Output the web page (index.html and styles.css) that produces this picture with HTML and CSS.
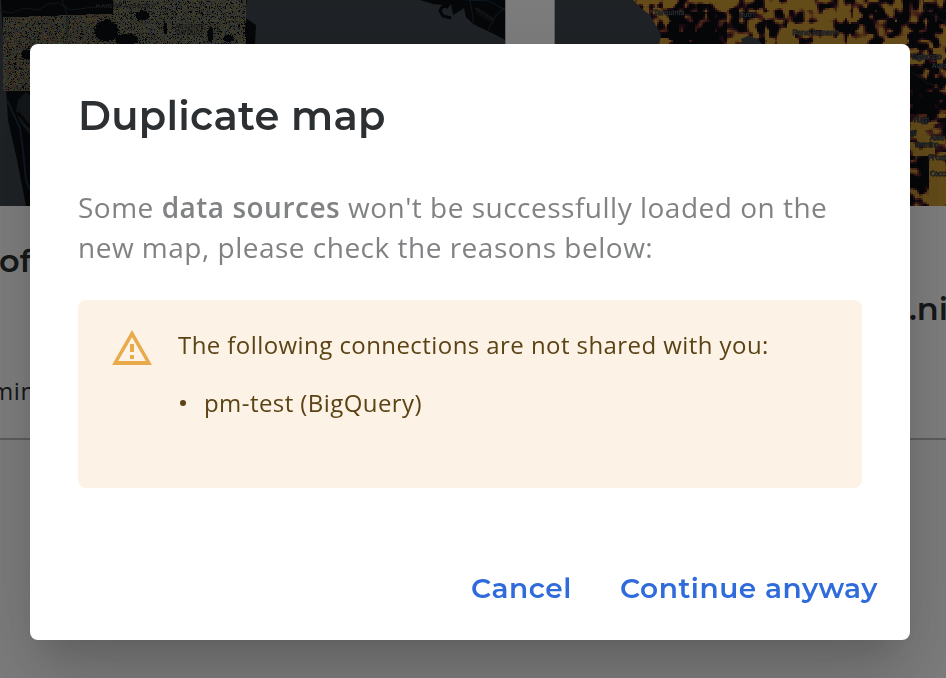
FILE: index.html
```html
<!DOCTYPE html>
<html lang="en">
<head>
<meta charset="utf-8">
<title>Duplicate map</title>
<link rel="stylesheet" href="styles.css">
</head>
<body>
<main class="maps">
  <article class="card">
    <div class="thumb">
      <canvas id="city" width="505" height="206"></canvas>
      <svg class="labels" viewBox="0 0 505 206">
        <g class="district"><text x="96" y="8" textLength="58">HAIGHT-ASHBURY</text><text x="176" y="28" textLength="27">MISSION</text><text x="176" y="34" textLength="27">DISTRICT</text></g>
      </svg>
    </div>
    <div class="name">of</div>
    <div class="meta">min</div>
  </article>
  <article class="card second">
    <div class="thumb">
      <canvas id="heat" width="392" height="206"></canvas>
      <svg class="labels" viewBox="0 0 392 206">
        <g class="town"><text x="99" y="15">Tarquinia</text><text x="185" y="17">Sutri</text><text x="238" y="35">Fiano Romano</text><text x="357" y="59" textLength="31">Tagliacozzo</text><text x="378" y="68">Avezzano</text><text x="360" y="122" textLength="15">Fiuggi</text><text x="354" y="135" textLength="8">agni</text><text x="376" y="140">Alatri</text><text x="361" y="147" textLength="24">Ferentino</text><text class="large" x="374" y="160">Frosinone</text><text x="376" y="176">Ceccano</text></g>
      </svg>
    </div>
    <div class="name">.ni</div>
  </article>
</main>
<div class="backdrop">
  <section class="dialog" role="dialog" aria-labelledby="title">
    <h1 id="title">Duplicate map</h1>
    <p class="intro">Some <strong>data sources</strong> won't be successfully loaded on the<br>new map, please check the reasons below:</p>
    <div class="alert">
      <svg class="warning" viewBox="0 0 40 35"><path fill-rule="evenodd" d="M20 0 40 35H0ZM20 7.2 6.2 31H33.8Z"/><path d="M18 14h4v8h-4zM18 25h4v4h-4z"/></svg>
      <div class="details">
        <p>The following connections are not shared with you:</p>
        <ul><li>pm-test (BigQuery)</li></ul>
      </div>
    </div>
    <footer><button class="cancel">Cancel</button><button class="continue">Continue anyway</button></footer>
  </section>
</div>
<script src="maps.js"></script>
</body>
</html>
```
FILE: styles.css
```css
* { box-sizing: border-box; }
body { margin: 0; width: 946px; height: 678px; overflow: hidden; background: #fafafa; font-family: "Open Sans", sans-serif; }
.maps { display: grid; grid-template-columns: 506px 392px; gap: 48px; height: 440px; }
.card { background: #fff; border-right: 1px solid #bbb; border-bottom: 2px solid #bbb; height: 440px; overflow: hidden; }
.card.second { border-right: 0; border-left: 1px solid #bbb; }
.thumb { position: relative; height: 206px; background: #3e454c; overflow: hidden; }
.thumb canvas { display: block; }
.labels { position: absolute; inset: 0; width: 100%; height: 206px; font-size: 7px; }
.district { fill: #777; stroke: #222; stroke-width: .3px; font-size: 6px; }
.town { fill: #68717b; stroke: #1d2227; stroke-width: 1px; paint-order: stroke; }
.town .large { font-size: 8px; }
.name { font: 600 32px/44px Montserrat, "Inter", sans-serif; color: #2c3032; padding-top: 33px; margin-left: -1px; }
.second .name { padding-top: 81px; padding-left: 355px; }
.meta { font-size: 24px; font-weight: 500; line-height: 34px; letter-spacing: .6px; color: #2c3032; margin-top: 91px; margin-left: -9px; }
.backdrop { position: fixed; inset: 0; background: rgba(0, 0, 0, .5); padding: 44px 36px 38px 30px; }
.dialog { width: 880px; height: 596px; padding: 48px 32px 24px 48px; background: #fff; border-radius: 8px; display: flex; flex-direction: column; box-shadow: 0 22px 30px -14px rgba(0,0,0,.12), 0 48px 76px 6px rgba(0,0,0,.1), 0 18px 92px 16px rgba(0,0,0,.08); }
h1 { margin: 0; font: 600 40px/48px Montserrat, "Inter", sans-serif; letter-spacing: .25px; color: #2c3032; }
.intro { margin: 47px 0 33px; font-size: 28px; line-height: 40px; letter-spacing: .5px; color: #808284; white-space: nowrap; }
.intro strong { font-weight: 600; }
.alert { display: flex; gap: 26px; width: 784px; height: 188px; padding: 30px 34px; border-radius: 8px; background: #fcf3e6; color: #5c4315; }
.warning { width: 40px; height: 35px; fill: #e8aa4b; }
.details { margin-top: -1px; font-size: 24px; line-height: 32px; letter-spacing: .43px; white-space: nowrap; }
.details p { margin: 0; }
.details ul { list-style: none; margin: 26px 0 0; padding: 0; }
.details li { display: flex; align-items: center; gap: 18px; }
.details li::before { content: ""; width: 6px; height: 6px; border-radius: 50%; background: currentColor; margin-left: 2px; }
footer { display: flex; justify-content: flex-end; gap: 48px; margin-top: auto; }
button { border: 0; padding: 0; background: none; color: #2f6bdb; font: 600 28px/56px Montserrat, "Inter", sans-serif; letter-spacing: .55px; }
```
FILE: maps.js
```js
let seed = 73;
function random() {
  seed = (seed + 0x6D2B79F5) | 0;
  let t = Math.imul(seed ^ (seed >>> 15), 1 | seed);
  t = (t + Math.imul(t ^ (t >>> 7), 61 | t)) ^ t;
  return ((t ^ (t >>> 14)) >>> 0) / 4294967296;
}

function polygon(c, points, color) {
  c.fillStyle = color;
  c.beginPath();
  points.forEach(([x, y]) => c.lineTo(x, y));
  c.closePath();
  c.fill();
}

function line(c, points, color, width = 1) {
  c.strokeStyle = color;
  c.lineWidth = width;
  c.beginPath();
  points.forEach(([x, y]) => c.lineTo(x, y));
  c.stroke();
}

// City streets with colored building dots
const city = document.getElementById('city').getContext('2d');
city.fillStyle = '#3e454c';
city.fillRect(0, 0, 505, 206);
polygon(city, [[1,0],[247,0],[244,17],[256,25],[255,44],[245,80],[245,206],[26,206],[17,160],[8,120],[5,70]], '#0a0d10');
const pockets = [[106,30,12,11],[126,39,12,6],[142,15,7,5],[165,28,2,6],[210,34,3,8],[228,38,5,4],[250,30,6,12],[26,54,5,5]];
for (let y = 0; y < 91; y++) {
  for (let x = 3; x < 246; x++) {
    if (x < 113 && y < 17 - x * .035) continue;
    if (pockets.some(p => ((x-p[0])/p[2])**2 + ((y-p[1])/p[3])**2 < .75 + random()*.45)) continue;
    const street = x % 6 === 0 || y % 5 === 0;
    if (random() < (street ? .97 : .83)) {
      const colors = x < 115 ? ['#8a7d4c','#858073','#95795e','#56817c','#9a8f35','#95565b','#58687e','#787968'] : ['#8a825c','#8a8578','#8c8376','#6b837f','#9e9138','#816f59','#657284','#808172'];
      city.fillStyle = colors[Math.floor(random() * colors.length)];
      city.globalAlpha = .65 + random() * .35;
      city.fillRect(x, y, 1, 1);
    }
  }
}
city.globalAlpha = 1;
line(city, [[0,11],[12,13],[24,8],[38,10],[48,4],[59,3],[70,10],[112,5]], '#252c35');
line(city, [[62,0],[67,14],[67,40]], '#253643');
line(city, [[7,100],[14,115],[20,128],[23,150],[26,180],[30,190]], '#202f43', 2);
polygon(city, [[18,100],[26,92],[30,96],[30,135],[20,122],[16,112]], '#272e34');
line(city, [[17,112],[30,127]], '#0a0d10', 3);
polygon(city, [[420,0],[505,0],[505,40],[494,34],[479,27],[472,23],[466,17],[464,8],[458,12],[453,15],[451,4],[447,9],[443,5],[433,4]], '#0a0d10');
line(city, [[451,18],[443,16],[440,11],[442,7],[447,6]], '#0a0d10', 3);
line(city, [[470,0],[473,18],[473,25]], '#28313a');
line(city, [[505,8],[497,14],[488,30]], '#28313a');
line(city, [[466,0],[489,1],[505,10]], '#1c3448');
for (let i = 0; i < 9; i++) line(city, [[475+i*2,9+i*1.3],[478+i*2,8+i*1.3],[476+i*2,13+i*1.3]], '#303941', .8);

// Smooth lattice values form the heat map clusters
const lattice = Array.from({length: 14000}, random);
function noise(x, y) {
  const ix = Math.floor(x), iy = Math.floor(y);
  const fx = x-ix, fy = y-iy;
  const v = (a,b) => lattice[a + b*120];
  return (v(ix,iy)*(1-fx)+v(ix+1,iy)*fx)*(1-fy)+(v(ix,iy+1)*(1-fx)+v(ix+1,iy+1)*fx)*fy;
}
// Dark ground, purple fringe, orange edge and amber centers
const stops = [[.40,10,13,16],[.47,70,24,42],[.53,140,68,45],[.60,202,154,52]];
function heatColor(value) {
  if (value <= stops[0][0]) return 'rgb(10,13,16)';
  for (let i = 1; i < stops.length; i++) {
    if (value < stops[i][0]) {
      const a = stops[i-1], b = stops[i];
      const t = (value-a[0])/(b[0]-a[0]);
      return 'rgb(' + [1,2,3].map(k => Math.round(a[k]+(b[k]-a[k])*t)).join() + ')';
    }
  }
  return 'rgb(202,154,52)';
}
const heat = document.getElementById('heat').getContext('2d');
for (let y = 0; y < 206; y += 2) {
  for (let x = 0; x < 392; x += 2) {
    let value = noise(x/5,y/5)*.65 + noise(x/13,y/13)*.35;
    if (x < 112) value += .06;
    if (x > 112 && x < 171 && y > 10) value -= .16;
    if (x > 208 && x < 295) value += .07 + Math.min(y, 44)*.0025;
    if (x > 295 && y < 42) value -= .05;
    if (x > 350 && y > 62 && y < 114) value -= .13;
    if (y > 120) value += .2;
    if (y > 155 && x < 374) value -= .32;
    heat.fillStyle = heatColor(value);
    heat.fillRect(x,y,2,2);
  }
}
polygon(heat, [[0,0],[78,0],[86,8],[95,15],[101,26],[106,35],[104,46],[108,206],[0,206]], '#3e454c');
polygon(heat, [[188,44],[186,39],[193,36],[203,39],[207,44]], '#3e454c');
line(heat, [[368,0],[371,9],[380,17],[392,22]], '#242b32');
line(heat, [[356,72],[365,77],[372,83],[384,87]], '#242b32');
```
